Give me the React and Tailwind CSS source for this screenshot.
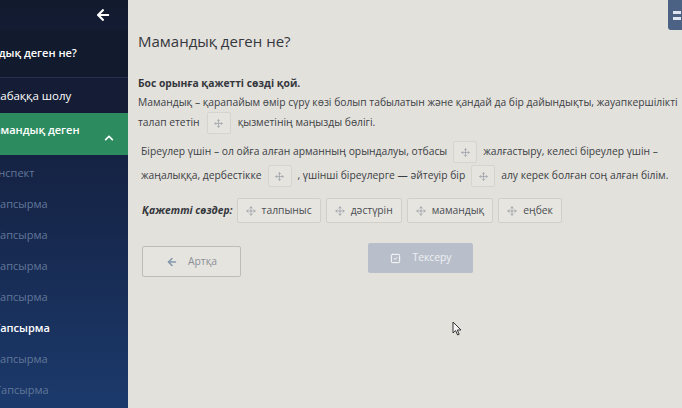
import { Move, ArrowLeft, SquareCheck } from "lucide-react";
import { FaArrowLeft, FaChevronUp } from "react-icons/fa";

const font = { fontFamily: '"Open Sans", "Noto Sans", sans-serif' };

function Blank({ className = "" }) {
  return (
    <span className={`inline-flex h-[22px] w-[24px] items-center justify-center rounded-[2px] border border-[#d6d4cf] bg-[#e6e4df] ${className}`}>
      <Move size={9} strokeWidth={2} className="text-[#9aa0a8]" />
    </span>
  );
}

function Chip({ label }) {
  return (
    <span className="inline-flex h-[25px] items-center gap-[6px] rounded-[2px] border border-[#d1cfca] bg-[#e7e5e0] px-[8px] text-[10.3px] text-[#4a4d52]">
      <Move size={10} strokeWidth={1.6} className="text-[#8e969f]" />
      {label}
    </span>
  );
}

function SideItem({ text, hide, active, bold }) {
  return (
    <div className="flex h-[31px] items-center overflow-hidden">
      <span
        className={`whitespace-nowrap text-[11px] ${active ? "text-white" : "text-[#62779a]"} ${bold ? "font-semibold" : ""}`}
        style={{ marginLeft: -hide }}
      >
        {text}
      </span>
    </div>
  );
}

export default function App() {
  return (
    <div className="relative flex h-[408px] w-[682px] overflow-hidden bg-[#e3e1dc]" style={font}>
      {/* Sidebar */}
      <aside className="flex w-[128px] shrink-0 flex-col overflow-hidden bg-gradient-to-b from-[#121a2e] via-[#16264a] to-[#1b3a6c]">
        <div className="flex h-[30px] items-center justify-end pr-[18px]">
          <FaArrowLeft size={14} className="text-white" />
        </div>
        <div className="flex h-[48px] items-center overflow-hidden border-b border-[#24304a] bg-[#121a2e]">
          <span className="whitespace-nowrap text-[11px] font-semibold text-white" style={{ marginLeft: -40 }}>
            Мамандық деген не?
          </span>
        </div>
        <div className="flex h-[35px] items-center overflow-hidden bg-[#141d35]">
          <span className="whitespace-nowrap text-[11.5px] text-white" style={{ marginLeft: -7 }}>
            Сабаққа шолу
          </span>
        </div>
        <div className="flex h-[42px] items-start justify-between overflow-hidden bg-[#2c8c60] pt-[9px] pr-[14px]">
          <span className="whitespace-nowrap text-[11px] font-semibold text-white" style={{ marginLeft: -16 }}>
            Мамандық деген
          </span>
          <FaChevronUp size={10} className="mt-[11px] text-white" />
        </div>
        <div className="flex flex-col pt-[3px]">
          <SideItem text="Конспект" hide={15} />
          <SideItem text="Тапсырма" hide={6} />
          <SideItem text="Тапсырма" hide={6} />
          <SideItem text="Тапсырма" hide={6} />
          <SideItem text="Тапсырма" hide={6} />
          <SideItem text="Тапсырма" hide={6} active bold />
          <SideItem text="Тапсырма" hide={6} />
          <SideItem text="Тапсырма" hide={5} />
        </div>
      </aside>

      {/* Main */}
      <main className="flex min-w-0 flex-1 flex-col pl-[10px] pt-[31px] text-[#3c3f44]">
        <h1 className="h-[20px] text-[15px] leading-[20px] text-[#34373c]">Мамандық деген не?</h1>

        <div className="mt-[24px] text-[10.3px] font-bold leading-[16px] text-[#34373c]">Бос орынға қажетті сөзді қой.</div>

        <div className="mt-[2px] whitespace-nowrap text-[10.3px] leading-[18px]">
          Мамандық – қарапайым өмір сүру көзі болып табылатын және қандай да бір дайындықты, жауапкершілікті
        </div>
        <div className="mt-[1px] flex h-[22px] items-center gap-[7px] whitespace-nowrap text-[10.3px]">
          <span>талап ететін</span>
          <Blank />
          <span>қызметінің маңызды бөлігі.</span>
        </div>

        <div className="mt-[7px] flex h-[22px] items-center gap-[6px] whitespace-nowrap pl-[3px] text-[10.3px]">
          <span>Біреулер үшін – ол ойға алған арманның орындалуы, отбасы</span>
          <Blank />
          <span>жалғастыру, келесі біреулер үшін –</span>
        </div>
        <div className="mt-[2px] flex h-[22px] items-center gap-[6px] whitespace-nowrap pl-[3px] text-[10.3px]">
          <span>жаңалыққа, дербестікке</span>
          <Blank />
          <span>, үшінші біреулерге — әйтеуір бір</span>
          <Blank />
          <span>алу керек болған соң алған білім.</span>
        </div>

        <div className="mt-[11px] flex items-center gap-[5px] whitespace-nowrap pl-[4px]">
          <span className="mr-[-1px] text-[10.3px] font-bold italic text-[#34373c]">Қажетті сөздер:</span>
          <Chip label="талпыныс" />
          <Chip label="дәстүрін" />
          <Chip label="мамандық" />
          <Chip label="еңбек" />
        </div>

        <div className="mt-[20px] flex items-start pl-[4px]">
          <button className="mt-[3px] flex h-[31px] w-[99px] items-center justify-center gap-[10px] rounded-[2px] border border-[#bdbcb8] bg-[#e6e4df] text-[10.3px] text-[#8a9099]">
            <ArrowLeft size={12} strokeWidth={3} className="text-[#8396ab]" />
            Артқа
          </button>
          <button className="ml-[127px] flex h-[30px] w-[105px] items-center justify-center gap-[12px] rounded-[2px] bg-[#b9bfca] text-[10.3px] text-[#edf0f4]">
            <SquareCheck size={11} strokeWidth={2} className="text-white" />
            Тексеру
          </button>
        </div>
      </main>

      {/* top-right menu tab */}
      <div className="absolute right-0 top-0 flex h-[30px] w-[14px] flex-col items-center justify-center gap-[3px] rounded-bl-[3px] bg-[#4b6285] pl-[3px]">
        <span className="h-[3px] w-[8px] bg-[#dfe6ef]" />
        <span className="h-[3px] w-[8px] bg-[#dfe6ef]" />
      </div>

      {/* mouse cursor */}
      <svg className="absolute left-[452px] top-[321px]" width="11" height="15" viewBox="0 0 11 15">
        <path d="M1 1 L1 12 L3.6 9.6 L5.6 14 L7.2 13.3 L5.3 9 L9 9 Z" fill="#f4f4f4" stroke="#333" strokeWidth="1" strokeLinejoin="round" />
      </svg>
    </div>
  );
}
